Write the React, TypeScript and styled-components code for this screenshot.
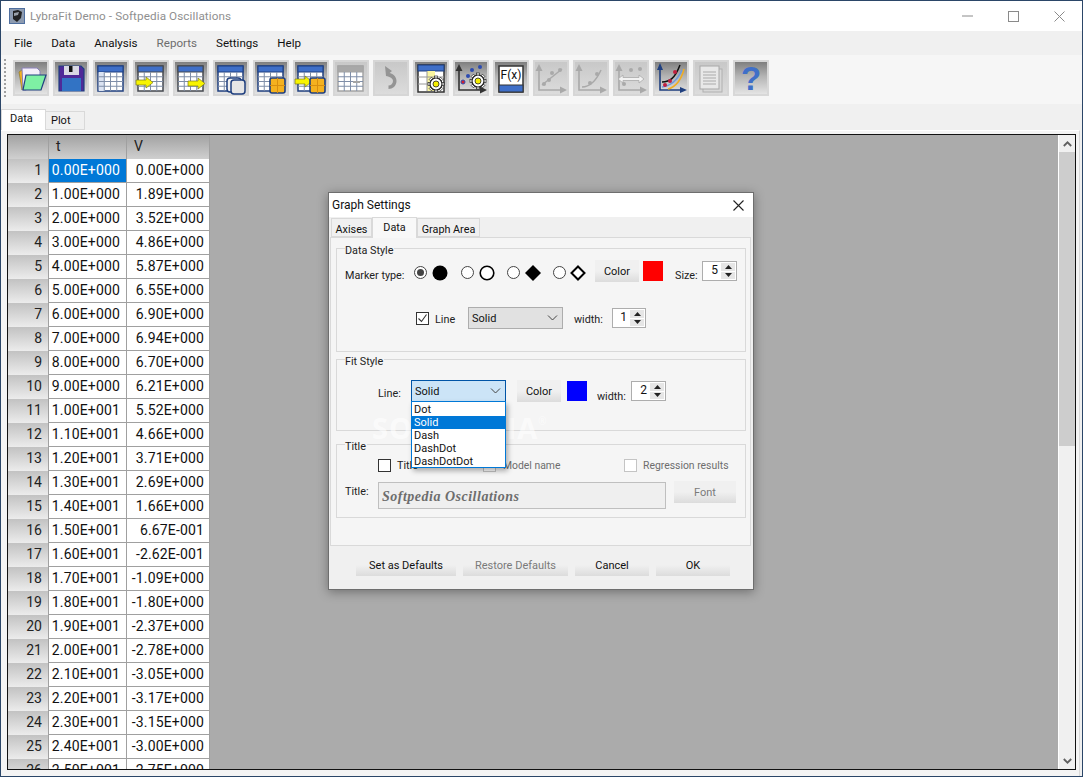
import React from "react";
import styled, { createGlobalStyle } from "styled-components";

const Global = createGlobalStyle`
  html, body { margin: 0; padding: 0; background: #f0f0f0; }
  body { font-family: Roboto, "Liberation Sans", sans-serif; font-size: 12px; color: #111; }
  * { box-sizing: border-box; }
`;

const Win = styled.div`
  width: 1083px; height: 777px; display: flex; flex-direction: column;
  border: 1px solid #2b4668; background: #f0f0f0; overflow: hidden; position: relative;
`;
const TitleBar = styled.div`
  height: 30px; background: #fff; display: flex; align-items: center; padding-left: 8px; flex: none;
`;
const AppTitle = styled.div`
  flex: 1; margin-left: 5px; color: #8f8f8f; font-size: 11.7px; letter-spacing: 0.1px;
`;
const Ctl = styled.div`
  width: 46px; height: 30px; display: flex; align-items: center; justify-content: center;
`;
const MenuBar = styled.div`
  height: 24px; display: flex; align-items: center; gap: 19px; padding-left: 13px; background: #f0f0f0; flex: none;
`;
const MenuItem = styled.span<{ $off?: boolean }>`
  font-size: 11.6px; color: ${p => (p.$off ? "#6d6d6d" : "#111")};
`;
const ToolBar = styled.div`
  height: 50px; flex: none; display: flex; align-items: flex-start; gap: 4px; padding: 5px 0 0 12px;
  background: #f6f6f6; position: relative; border-bottom: 1px solid #f0f0f0;
`;
const Grip = styled.div`
  position: absolute; left: 3px; top: 4px; width: 2px; height: 38px;
  background: repeating-linear-gradient(#a0a0a0 0 2px, transparent 2px 4px);
`;
const ToolBtn = styled.div<{ $off?: boolean }>`
  width: 36px; height: 36px; flex: none; border: 2px solid ${p => (p.$off ? "#d6d6d6" : "#d8d8d8")};
  background: ${p => (p.$off
    ? "linear-gradient(#c8c8c8, #dcdcdc)"
    : "linear-gradient(#7f7f7f, #b4b4b4 45%, #e4e4e4)")};
  svg { display: block; margin: -2px; width: 36px; height: 36px; }
`;
const TabRow = styled.div`
  height: 25px; flex: none; display: flex; align-items: flex-end; background: #f0f0f0;
`;
const PageTab = styled.div<{ $on?: boolean }>`
  height: ${p => (p.$on ? 21 : 19)}px; width: ${p => (p.$on ? 45 : 39)}px; padding-left: ${p => (p.$on ? 8 : 5)}px;
  padding-top: 2px; font-size: 11px;
  background: ${p => (p.$on ? "#fff" : "#f0f0f0")};
  border: 1px solid #d9d9d9; border-bottom: ${p => (p.$on ? "none" : "1px solid #d9d9d9")};
  border-left: ${p => (p.$on ? "1px solid #d9d9d9" : "none")};
`;
const Page = styled.div`
  flex: 1; min-height: 0; margin-right: 2px; background: #f4f4f4; border-top: 1px solid #fff; border-right: 1px solid #d9d9d9;
  padding: 3px 3px 6px 6px; display: flex; flex-direction: column;
`;
const Frame = styled.div`
  flex: 1; min-height: 0; border: 1px solid #111; background: #ababab; display: flex; overflow: hidden;
`;
const Sheet = styled.div`
  display: grid; grid-template-columns: 41px 78px 83px; grid-auto-rows: 24px; align-self: flex-start; flex: none;
`;
const Corner = styled.div`
  background: linear-gradient(#a2a2a2, #d0d0d0); border-right: 1px solid #a0a0a0;
`;
const ColHead = styled.div`
  background: linear-gradient(#a2a2a2, #cfcfcf); border-right: 1px solid #a0a0a0;
  font-size: 14px; padding: 3px 0 0 7px; color: #222;
`;
const RowHead = styled.div`
  background: linear-gradient(#c2c2c2, #ececec); border-right: 1px solid #a0a0a0;
  text-align: right; font-size: 14px; padding: 3px 6px 0 0; color: #222;
`;
const Cell = styled.div<{ $sel?: boolean; $first?: boolean }>`
  background: ${p => (p.$sel ? "#0078d7" : "#fff")}; color: ${p => (p.$sel ? "#fff" : "#111")};
  border-right: 1px solid #a0a0a0; border-bottom: 1px solid #a0a0a0;
  text-align: right; font-size: 14px; padding: 3px ${p => (p.$first ? 6 : 5)}px 0 0; letter-spacing: 0.15px; white-space: nowrap;
`;
const Gray = styled.div`flex: 1; border-right: 1px solid #fff;`;
const Scroll = styled.div`
  width: 16px; flex: none; background: #f0f0f0; display: flex; flex-direction: column;
`;
const ScrollBtn = styled.div`
  height: 17px; display: flex; align-items: center; justify-content: center; flex: none;
`;
const Thumb = styled.div`height: 294px; flex: none; background: #cdcdcd;`;
const Track = styled.div`flex: 1;`;

const Dialog = styled.div`
  position: absolute; left: 327px; top: 191px; width: 426px; height: 398px;
  background: #f0f0f0; border: 1px solid #6e6e6e; box-shadow: 0 2px 10px rgba(0,0,0,.35);
  display: flex; flex-direction: column;
`;
const DlgTitle = styled.div`
  height: 24px; flex: none; background: #fff; display: flex; align-items: center; justify-content: space-between;
  padding: 0 9px 0 3px; font-size: 12px;
`;
const DlgTabs = styled.div`
  height: 20px; flex: none; display: flex; align-items: flex-end; padding-left: 2px; position: relative; z-index: 1;
  background: #f0f0f0;
`;
const DlgTab = styled.div<{ $on?: boolean; $w: number }>`
  width: ${p => p.$w}px; height: ${p => (p.$on ? 21 : 19)}px; margin-bottom: ${p => (p.$on ? -1 : 0)}px;
  border: 1px solid #d9d9d9; border-bottom: ${p => (p.$on ? "none" : "1px solid #d9d9d9")};
  background: ${p => (p.$on ? "#f8f8f8" : "#f0f0f0")}; text-align: center; padding-top: ${p => (p.$on ? 3 : 4)}px; font-size: 10.8px;
`;
const TabBody = styled.div`
  flex: 1; margin: 0 2px 0 1px; background: #f5f5f5; border: 1px solid #d9d9d9; padding: 3px 4px 0 5px;
  display: flex; flex-direction: column;
`;
const Group = styled.fieldset<{ $h: number; $pt: number; $mt?: number }>`
  margin: ${p => p.$mt ?? 0}px 0 0 0; padding: ${p => p.$pt}px 0 0 8px; height: ${p => p.$h}px; flex: none; min-width: 0;
  border: 1px solid #d9d9d9; display: block;
`;
const Legend = styled.legend`
  padding: 0 1px 0 0; height: 15px; line-height: 19px; font-size: 10.8px; color: #222;
`;
const Row = styled.div<{ $mt?: number; $h?: number }>`
  display: flex; align-items: center; height: ${p => p.$h ?? 22}px; margin-top: ${p => p.$mt ?? 0}px; white-space: nowrap;
`;
const Gap = styled.span<{ $w: number }>`width: ${p => p.$w}px; flex: none;`;
const Label = styled.span<{ $w?: number; $off?: boolean; $dy?: number }>`
  flex: none; width: ${p => (p.$w ? `${p.$w}px` : "auto")}; font-size: ${p => (p.$off ? 10.4 : 10.8)}px; color: ${p => (p.$off ? "#6d6d6d" : "#222")};
  margin-top: ${p => p.$dy ?? 0}px;
`;
const Radio = styled.span<{ $on?: boolean }>`
  width: 13px; height: 13px; border-radius: 50%; border: 1px solid #444; background: #fff; flex: none;
  display: flex; align-items: center; justify-content: center; margin-top: 3px;
  &::after { content: ""; width: 7px; height: 7px; border-radius: 50%; background: ${p => (p.$on ? "#444" : "transparent")}; }
`;
const Check = styled.span<{ $off?: boolean }>`
  width: 13px; height: 13px; border: 1px solid ${p => (p.$off ? "#c4c4c4" : "#333")}; background: #fff; flex: none;
  display: flex; align-items: center; justify-content: center;
`;
const Btn = styled.div<{ $w: number; $off?: boolean; $mb?: number }>`
  width: ${p => p.$w}px; height: 22px; flex: none; display: flex; align-items: center; justify-content: center;
  background: linear-gradient(#f0f0f0, #f0f0f0 50%, #dcdcdc); font-size: 11px; color: ${p => (p.$off ? "#7a7a7a" : "#111")};
  margin-bottom: ${p => p.$mb ?? 0}px;
`;
const Swatch = styled.div<{ $c: string }>`
  width: 20px; height: 20px; background: ${p => p.$c}; flex: none; margin-bottom: 1px;
`;
const Spin = styled.div<{ $w: number }>`
  width: ${p => p.$w}px; height: 20px; flex: none; border: 1px solid #adadad; background: #fff; display: flex; align-items: stretch;
`;
const SpinVal = styled.div`flex: 1; text-align: right; padding: 1px 2px 0 0; font-size: 12px;`;
const SpinBtns = styled.div`
  width: 16px; flex: none; display: flex; flex-direction: column; gap: 1px; background: #fff; padding: 1px 1px;
`;
const SpinBtn = styled.div`
  flex: 1; background: #e6e6e6; display: flex; align-items: center; justify-content: center;
`;
const Select = styled.div<{ $open?: boolean }>`
  position: relative; width: 95px; height: 22px; flex: none; display: flex; align-items: center; justify-content: space-between;
  padding: 0 4px 0 3px; font-size: 11px;
  background: ${p => (p.$open ? "#cce4f7" : "#e1e1e1")}; border: 1px solid ${p => (p.$open ? "#0054a6" : "#adadad")};
`;
const DropList = styled.div`
  position: absolute; left: -1px; top: 20px; width: 95px; height: 67px; background: #fff; border: 1px solid #0078d7;
  box-shadow: 2px 3px 5px rgba(0,0,0,.3); z-index: 3; padding-top: 1px;
`;
const DropItem = styled.div<{ $on?: boolean }>`
  height: 13px; line-height: 13px; padding-left: 2px; font-size: 11px;
  background: ${p => (p.$on ? "#0078d7" : "transparent")}; color: ${p => (p.$on ? "#fff" : "#111")};
`;
const TitleInput = styled.div`
  width: 288px; height: 27px; flex: none; background: #efefef; border: 1px solid #bfbfbf; padding: 6px 0 0 3px;
  font-family: "Liberation Serif", serif; font-style: italic; font-weight: bold; font-size: 14px; letter-spacing: 0.5px; color: #6d6d6d;
`;
const DlgFoot = styled.div`
  height: 43px; flex: none; display: flex; gap: 7px; padding: 8px 0 0 27px;
`;
const Water = styled.div`
  position: absolute; left: 43px; top: 215px; font-family: "Open Sans", sans-serif; font-size: 29px; font-weight: 700;
  color: rgba(255,255,255,.6); letter-spacing: 1px; z-index: 2; pointer-events: none; white-space: nowrap;
  sup { font-size: 10px; font-weight: 400; vertical-align: top; line-height: 26px; }
`;

const V = ["0.00E+000","1.89E+000","3.52E+000","4.86E+000","5.87E+000","6.55E+000","6.90E+000","6.94E+000","6.70E+000","6.21E+000","5.52E+000","4.66E+000","3.71E+000","2.69E+000","1.66E+000","6.67E-001","-2.62E-001","-1.09E+000","-1.80E+000","-2.37E+000","-2.78E+000","-3.05E+000","-3.17E+000","-3.15E+000","-3.00E+000","-2.75E+000"];
const T = V.map((_, i) => i < 10 ? `${i}.00E+000` : `${(i / 10).toFixed(2)}E+001`);

const navy = "#1f3f7f", blue = "#3f6fc8";

const Grid = ({ x = 5, y = 6, w = 25, h = 25, c = navy, head = blue, rowTint }: any) => {
  const cw = w / 4, top = 6, ch = (h - top) / 4;
  return (
    <g>
      <rect x={x} y={y} width={w} height={h} fill="#fff" stroke={c} strokeWidth="1.5" />
      <rect x={x} y={y} width={w} height={top} fill={head} stroke={c} strokeWidth="1" />
      {rowTint && <rect x={x + .7} y={y + top} width={cw} height={h - top} fill={rowTint} />}
      {[1, 2, 3].map(i => <line key={i} x1={x + cw * i} x2={x + cw * i} y1={y + top} y2={y + h} stroke="#7f8ea8" strokeWidth="1" />)}
      {[1, 2, 3].map(i => <line key={i} x1={x} x2={x + w} y1={y + top + ch * i} y2={y + top + ch * i} stroke="#7f8ea8" strokeWidth="1" />)}
    </g>
  );
};
const Arrow = ({ x, y }: { x: number; y: number }) => (
  <path d={`M${x} ${y + 3}h10v-3l7 5.5-7 5.5v-3h-10z`} fill="#f8f400" stroke="#7a7a20" strokeWidth=".7" />
);
const Orange = ({ x, y }: { x: number; y: number }) => (
  <g>
    <rect x={x} y={y} width="15" height="15" rx="2" fill="#f5b21f" stroke={navy} strokeWidth="1.6" />
    <path d={`M${x + 7.5} ${y}v15M${x} ${y + 7.5}h15`} stroke="#d88f10" strokeWidth="1" />
  </g>
);
const Axes = ({ c }: { c: string }) => (
  <g>
    <path d="M6 10V30H30" fill="none" stroke={c} strokeWidth="1.6" />
    <path d="M6 4l-3.500 7h7zM34 30l-7-3.500v7z" fill={c} />
  </g>
);
const Gear = ({ x, y }: { x: number; y: number }) => (
  <g transform={`translate(${x} ${y})`}>
    {[0, 45, 90, 135].map(a => <rect key={a} x="-8" y="-1.6" width="16" height="3.2" fill="#fff" stroke="#222" strokeWidth=".7" transform={`rotate(${a})`} />)}
    <circle r="6" fill="#fff" stroke="#222" strokeWidth="1.2" />
    <circle r="3" fill="#f5ee00" stroke="#222" strokeWidth=".8" />
  </g>
);
const Dots = ({ pts, c }: { pts: number[][]; c: string }) => (
  <g>{pts.map((p, i) => <circle key={i} cx={p[0]} cy={p[1]} r="2" fill={c} />)}</g>
);
const off = "#a9a9a9";

const tools: { off?: boolean; g: React.ReactNode }[] = [
  { g: <g>
      <path d="M6 12l6-4v10l-3 12z" fill="#f5b21f" stroke="#8a7a30" strokeWidth=".7" />
      <path d="M9 8h15l3 3v8l-14 11h-3z" fill="#f4eefa" stroke="#8a80b8" strokeWidth="1" />
      <path d="M13 15h20l-5 15H10z" fill="#7ef0a4" stroke={navy} strokeWidth="1.2" />
    </g> },
  { g: <g>
      <path d="M6 6h22l3 3v22H6z" fill="#4f2a98" stroke={navy} strokeWidth="1.2" />
      <rect x="11" y="6" width="15" height="9" fill="#d8d8e4" />
      <rect x="16" y="6" width="3.5" height="6" fill="#111" />
      <rect x="9" y="18" width="19" height="13" fill="#3273c4" />
    </g> },
  { g: <Grid rowTint="#dbe3f2" /> },
  { g: <g><Grid c="#44484f" head={blue} /><Arrow x={3} y={17} /></g> },
  { g: <g><Grid c="#44484f" head={blue} /><Arrow x={15} y={18} /></g> },
  { g: <g><Grid /><rect x="14" y="18" width="14" height="14" rx="3" fill="#f0f0f0" stroke={navy} strokeWidth="1.5" /><rect x="18" y="20" width="14" height="14" rx="3" fill="#e6e6e6" stroke={navy} strokeWidth="1.5" /></g> },
  { g: <g><Grid /><Orange x={17} y={18} /></g> },
  { g: <g><Grid /><Arrow x={2} y={16} /><Orange x={17} y={18} /></g> },
  { off: true, g: <g><Grid c="#a4a4a4" head="#a8a8a8" /><rect x="20" y="21" width="7" height="2" fill="#a4a4a4" /></g> },
  { off: true, g: <path d="M12 6l7 5-6 5 .5-3.5c6 .5 10 3.5 10 8.5 0 5-4 8-8 8v-3.500c2.500 0 4.500-2 4.500-4.500 0-2.500-3-4.500-7-5z" fill="#949494" /> },
  { g: <g><rect x="5" y="5" width="26" height="27" fill="#fff" stroke="#333" strokeWidth="1.5" /><rect x="5" y="5" width="26" height="6" fill={blue} stroke={navy} /><rect x="14" y="11" width="8" height="20" fill="#f9f5a0" /><path d="M5 17h26M5 24h26M14 11v20" stroke="#999" /><Gear x={23} y={24} /></g> },
  { g: <g><Axes c="#333" /><Dots c="#2c4bb0" pts={[[19, 10], [27, 7], [15, 16]]} /><circle cx="10" cy="22" r="2" fill="#d02030" stroke="#2c4bb0" /><Gear x={25} y={21} /></g> },
  { g: <g><rect x="6" y="6" width="24" height="26" fill="#fff" stroke="#333" strokeWidth="1.5" /><rect x="6" y="25" width="24" height="7" fill={blue} stroke="#333" /><text x="18" y="19" textAnchor="middle" fontFamily="Roboto, sans-serif" fontSize="12" fill="#111">F(x)</text></g> },
  { off: true, g: <g><Axes c={off} /><path d="M9 25L29 9" stroke={off} strokeWidth="1.5" /><Dots c={off} pts={[[11, 24], [16, 20], [19, 13], [27, 10]]} /></g> },
  { off: true, g: <g><Axes c={off} /><path d="M9 27c8 0 14-6 19-17" stroke={off} strokeWidth="1.5" fill="none" /><Dots c={off} pts={[[17, 23], [24, 14]]} /></g> },
  { off: true, g: <g><Axes c={off} /><Dots c={off} pts={[[18, 10], [27, 9], [11, 24]]} /><path d="M5 19l5-4v2.500h16V15l5 4-5 4v-2.500H10V23z" fill="#f2f2f2" stroke={off} strokeWidth=".8" /></g> },
  { g: <g><path d="M7 6v24h24" fill="none" stroke={navy} strokeWidth="1.6" /><path d="M7 3l-3 7h6zM34 30l-7-3v6z" fill={navy} /><path d="M9 22c8 0 13-4 18-17" stroke="#111" strokeWidth="1.5" fill="none" /><path d="M9 27c9-1 15-6 20-17" stroke="#6a9be0" strokeWidth="1.5" fill="none" /><path d="M15 29c7-2 13-8 16-20" stroke="#f0ac20" strokeWidth="1.5" fill="none" /><Dots c="#c02040" pts={[[12, 25], [17, 21], [22, 12]]} /></g> },
  { off: true, g: <g><rect x="10" y="9" width="19" height="23" fill="#d8d8d8" stroke="#b0b0b0" /><rect x="7" y="6" width="19" height="23" fill="#e8e8e8" stroke="#a8a8a8" /><path d="M10 12h13M10 15h13M10 18h13M10 21h13M10 24h13" stroke="#aaa" /></g> },
  { g: <text x="18" y="30" textAnchor="middle" fontFamily="'Liberation Sans', sans-serif" fontWeight="bold" fontSize="33" fill="#3f6fc8">?</text> },
];

const Down = ({ c = "#444" }: { c?: string }) => (
  <svg width="11" height="6" viewBox="0 0 11 6"><path d="M1 .5l4.500 4.500L10 .5" fill="none" stroke={c} /></svg>
);
const Tick = () => (
  <svg width="11" height="11" viewBox="0 0 11 11"><path d="M1.500 5.500l3 3 5-7" fill="none" stroke="#333" strokeWidth="1.1" /></svg>
);
const Spinner = ({ w, v }: { w: number; v: number }) => (
  <Spin $w={w}>
    <SpinVal>{v}</SpinVal>
    <SpinBtns>
      <SpinBtn><svg width="7" height="4" viewBox="0 0 7 4"><path d="M3.500 0L7 4H0z" fill="#222" /></svg></SpinBtn>
      <SpinBtn><svg width="7" height="4" viewBox="0 0 7 4"><path d="M0 0h7L3.500 4z" fill="#222" /></svg></SpinBtn>
    </SpinBtns>
  </Spin>
);
const MarkerSvg = styled.svg`flex: none; margin-top: 3px;`;
const Marker = ({ k }: { k: string }) => (
  <MarkerSvg width="16" height="16" viewBox="0 0 16 16">
    {k === "fill" && <circle cx="8" cy="8" r="7.500" fill="#000" />}
    {k === "ring" && <circle cx="8" cy="8" r="6.800" fill="#fff" stroke="#000" strokeWidth="1.600" />}
    {k === "dia" && <path d="M8 0l8 8-8 8-8-8z" fill="#000" />}
    {k === "diao" && <path d="M8 1.500L14.500 8 8 14.500 1.500 8z" fill="#fff" stroke="#000" strokeWidth="2" />}
  </MarkerSvg>
);

export default function App() {
  return (
    <>
      <Global />
      <Win>
        <TitleBar>
          <svg width="16" height="16" viewBox="0 0 16 16">
            <rect width="16" height="16" fill="#4f6f9f" />
            <rect x="1" y="1" width="14" height="14" fill="#8d9bb0" />
            <path d="M4 3l5-1 4 2-1 6-4 4-4-3z" fill="#222" />
            <path d="M5 5l5-1-1 3-4 1z" fill="#9aa0a8" />
          </svg>
          <AppTitle>LybraFit Demo - Softpedia Oscillations</AppTitle>
          <Ctl><svg width="11" height="2" viewBox="0 0 11 2"><path d="M0 1h11" stroke="#8a8a8a" /></svg></Ctl>
          <Ctl><svg width="11" height="11" viewBox="0 0 11 11"><rect x=".5" y=".5" width="10" height="10" fill="none" stroke="#8a8a8a" /></svg></Ctl>
          <Ctl><svg width="11" height="11" viewBox="0 0 11 11"><path d="M.5.5l10 10M10.500.5l-10 10" stroke="#8a8a8a" /></svg></Ctl>
        </TitleBar>
        <MenuBar>
          <MenuItem>File</MenuItem>
          <MenuItem>Data</MenuItem>
          <MenuItem>Analysis</MenuItem>
          <MenuItem $off>Reports</MenuItem>
          <MenuItem>Settings</MenuItem>
          <MenuItem>Help</MenuItem>
        </MenuBar>
        <ToolBar>
          <Grip />
          {tools.map((t, i) => (
            <ToolBtn key={i} $off={t.off}><svg viewBox="0 0 36 36">{t.g}</svg></ToolBtn>
          ))}
        </ToolBar>
        <TabRow>
          <PageTab $on>Data</PageTab>
          <PageTab>Plot</PageTab>
        </TabRow>
        <Page>
          <Frame>
            <Sheet>
              <Corner />
              <ColHead>t</ColHead>
              <ColHead>V</ColHead>
              {V.map((v, i) => (
                <React.Fragment key={i}>
                  <RowHead>{i + 1}</RowHead>
                  <Cell $sel={i === 0} $first>{T[i]}</Cell>
                  <Cell>{v}</Cell>
                </React.Fragment>
              ))}
            </Sheet>
            <Gray />
            <Scroll>
              <ScrollBtn><svg width="9" height="6" viewBox="0 0 9 6"><path d="M.8 5L4.500 1.300 8.200 5" fill="none" stroke="#606060" strokeWidth="1.800" /></svg></ScrollBtn>
              <Thumb />
              <Track />
              <ScrollBtn><svg width="9" height="6" viewBox="0 0 9 6"><path d="M.8 1L4.500 4.700 8.200 1" fill="none" stroke="#606060" strokeWidth="1.800" /></svg></ScrollBtn>
            </Scroll>
          </Frame>
        </Page>

        <Dialog>
          <DlgTitle>
            <span>Graph Settings</span>
            <svg width="11" height="11" viewBox="0 0 11 11"><path d="M.5.5l10 10M10.500.5l-10 10" stroke="#222" strokeWidth="1.100" /></svg>
          </DlgTitle>
          <DlgTabs>
            <DlgTab $w={41}>Axises</DlgTab>
            <DlgTab $w={45} $on>Data</DlgTab>
            <DlgTab $w={63}>Graph Area</DlgTab>
          </DlgTabs>
          <TabBody>
            <Group $h={111} $pt={4}>
              <Legend>Data Style</Legend>
              <Row>
                <Label $w={69} $dy={9}>Marker type:</Label>
                <Radio $on /><Gap $w={5} /><Marker k="fill" /><Gap $w={13} />
                <Radio /><Gap $w={5} /><Marker k="ring" /><Gap $w={12} />
                <Radio /><Gap $w={5} /><Marker k="dia" /><Gap $w={12} />
                <Radio /><Gap $w={4} /><Marker k="diao" /><Gap $w={9} />
                <Btn $w={44}>Color</Btn><Gap $w={4} />
                <Swatch $c="#ff0000" /><Gap $w={12} />
                <Label $w={27} $dy={9}>Size:</Label>
                <Spinner w={35} v={5} />
              </Row>
              <Row $mt={25}>
                <Gap $w={71} /><Check><Tick /></Check><Gap $w={6} />
                <Label $w={33} $dy={3}>Line</Label>
                <Select>Solid<Down /></Select><Gap $w={11} />
                <Label $w={38} $dy={2}>width:</Label>
                <Spinner w={34} v={1} />
              </Row>
            </Group>
            <Group $h={79} $pt={13}>
              <Legend>Fit Style</Legend>
              <Row>
                <Gap $w={33} /><Label $w={33} $dy={5}>Line:</Label>
                <Select $open>
                  Solid<Down />
                  <DropList>
                    <DropItem>Dot</DropItem>
                    <DropItem $on>Solid</DropItem>
                    <DropItem>Dash</DropItem>
                    <DropItem>DashDot</DropItem>
                    <DropItem>DashDotDot</DropItem>
                  </DropList>
                </Select>
                <Gap $w={11} />
                <Btn $w={44}>Color</Btn><Gap $w={6} />
                <Swatch $c="#0000ff" /><Gap $w={10} />
                <Label $w={34} $dy={11}>width:</Label>
                <Spinner w={35} v={2} />
              </Row>
            </Group>
            <Group $h={81} $pt={6} $mt={6}>
              <Legend>Title</Legend>
              <Row $h={14}>
                <Gap $w={33} /><Check /><Gap $w={6} />
                <Label $w={86}>Title</Label>
                <Check $off /><Gap $w={7} />
                <Label $w={121} $off>Model name</Label>
                <Check $off /><Gap $w={6} />
                <Label $off>Regression results</Label>
              </Row>
              <Row $mt={9} $h={28}>
                <Label $w={33} $dy={-8}>Title:</Label>
                <TitleInput>Softpedia Oscillations</TitleInput>
                <Gap $w={8} />
                <Btn $w={62} $off $mb={6}>Font</Btn>
              </Row>
            </Group>
          </TabBody>
          <DlgFoot>
            <Btn $w={100}>Set as Defaults</Btn>
            <Btn $w={105} $off>Restore Defaults</Btn>
            <Btn $w={74}>Cancel</Btn>
            <Btn $w={74}>OK</Btn>
          </DlgFoot>
          <Water>SOFTPEDIA<sup>®</sup></Water>
        </Dialog>
      </Win>
    </>
  );
}
